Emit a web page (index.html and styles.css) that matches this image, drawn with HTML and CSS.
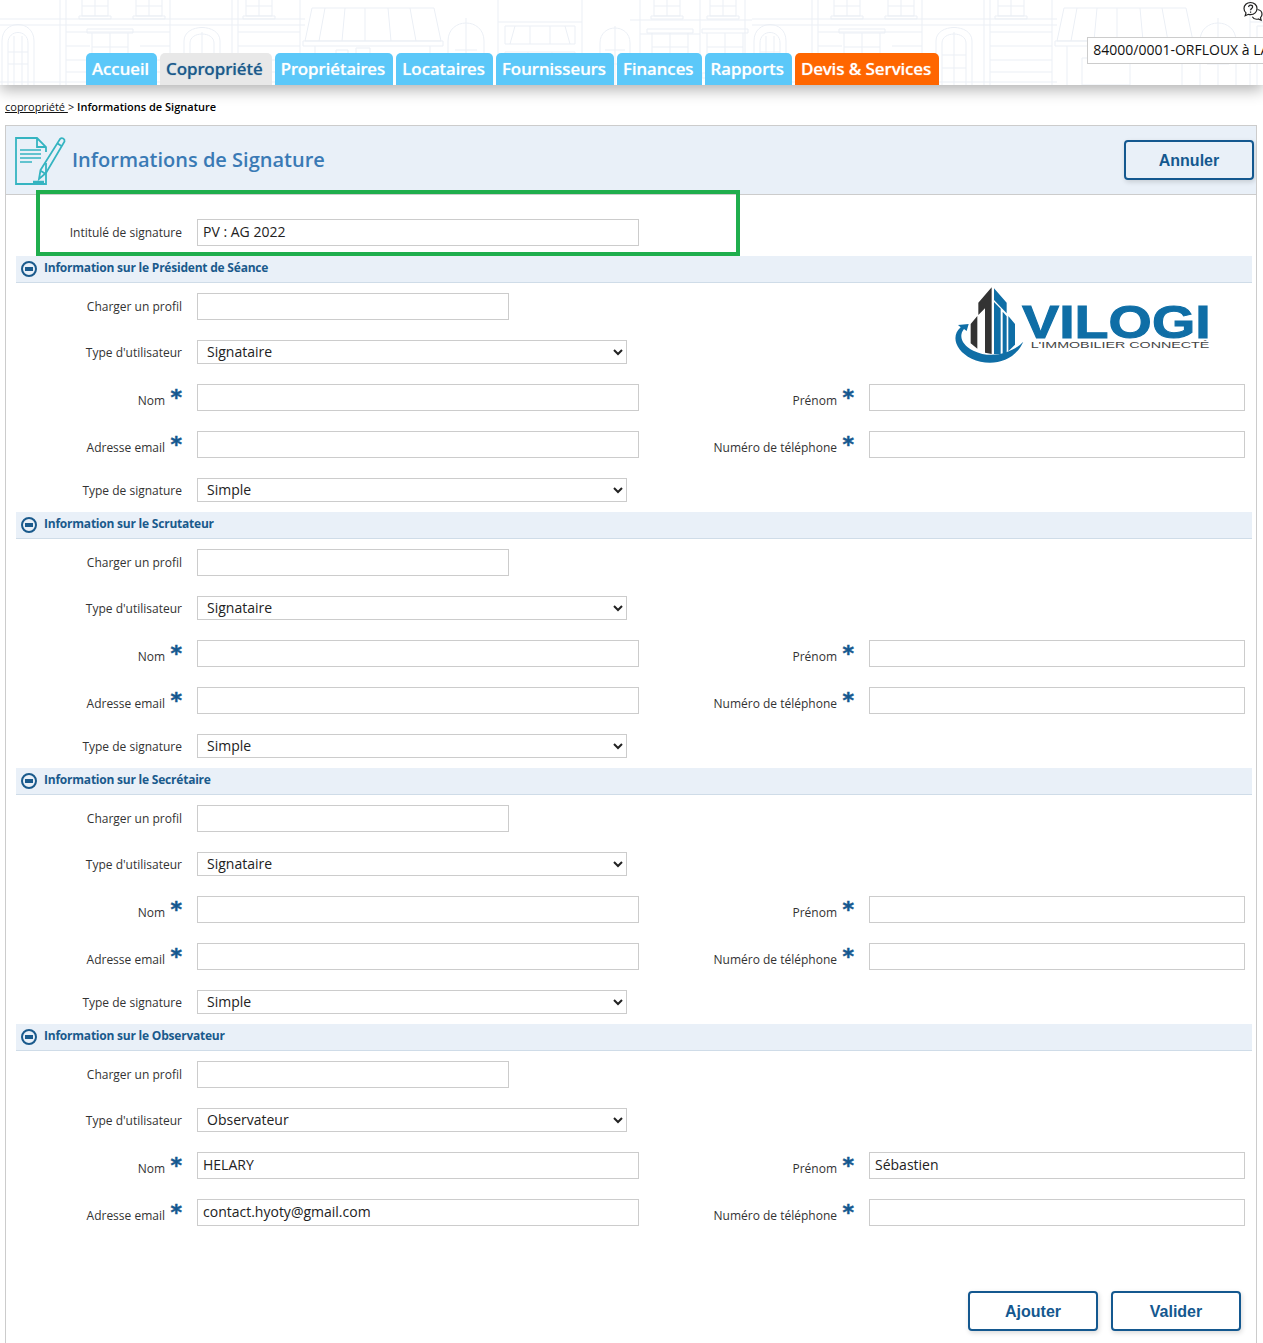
FILE: index.html
```html
<!DOCTYPE html>
<html lang="fr">
<head>
    <meta charset="UTF-8">
    <meta name="viewport" content="width=device-width, initial-scale=1.0">
    <title>Informations de Signature</title>
    <link rel="stylesheet" href="styles.css">
</head>
<body>
    <!-- Top bar -->
    <header class="topbar">
        <svg class="topbar-bg" width="1263" height="85" aria-hidden="true">
            <defs>
                <g id="win" fill="none" stroke="#ebeff5" stroke-width="1">
                    <path d="M-3 -6h46v4h-46zM2 -2v40h36v-40M20 -2v40M2 12h36M2 26h36M-3 38h46v5h-46z"/>
                </g>
                <g id="top-win" fill="none" stroke="#ebeff5" stroke-width="1">
                    <path d="M0 0v16h26v-16M13 0v16M0 6h26M-3 16h32v3h-32z"/>
                </g>
                <pattern id="facade" width="752" height="85" patternUnits="userSpaceOnUse">
                    <g fill="none" stroke="#ebeff5" stroke-width="1">
                        <path d="M0 19h305M0 25h305M60 0v85M66 0v85M170 0v85M232 0v85M238 0v85M300 0v85M0 82h305"/>
                        <path d="M66 32h104M66 60h24M66 72h24M66 46h24M140 46h30M140 60h30M140 72h30M238 32h62M238 46h62M238 60h62M238 72h62"/>
                        <path d="M2 85v-44c0-22 32-22 32 0v44M8 85v-42c0-14 20-14 20 0v42M14 36v49M22 36v49M8 52h20M8 64h20"/>
                        <path d="M184 85v-44c0-18 36-18 36 0v44M190 85v-42c0-12 24-12 24 0v42M202 32v53M190 55h24M190 68h24"/>
                        <path d="M312 8h122l7 33h-136zM325 8l-6 33M345 8l-3 33M365 8v33M388 8l3 33M410 8l6 33M303 41h140v5h-140zM315 46v39M430 46v39"/>
                        <path d="M330 58h48v27h-48zM336 58v-8h12v8M356 58v-10h14v10"/>
                        <path d="M448 85v-44c0-24 36-24 36 0v44M466 18v67M455 50h22M455 64h22"/>
                        <path d="M498 0v85M582 0v85M498 22h84M505 26h70v18h-70zM515 26l-5 18M530 26v18M550 26v18M565 26l5 18M505 52h70v33M505 52v33M528 52v33M552 52v33"/>
                        <path d="M600 85v-42c0-20 30-20 30 0v42M615 26v59M605 50h20M605 64h20M640 0v85M700 0v85M745 0v85M630 20h122M640 34h60M640 74h60"/>
                    </g>
                    <use href="#win" x="90" y="35"/>
                    <use href="#top-win" x="82" y="0"/>
                    <use href="#top-win" x="136" y="0"/>
                    <use href="#top-win" x="246" y="0"/>
                    <use href="#top-win" x="654" y="0"/>
                    <use href="#top-win" x="710" y="0"/>
                    <use href="#win" x="650" y="35"/>
                    <use href="#win" x="705" y="35"/>
                </pattern>
            </defs>
            <rect width="1263" height="85" fill="url(#facade)"/>
        </svg>
        <nav class="tabs">
            <a class="tab">Accueil</a>
            <a class="tab active">Copropriété</a>
            <a class="tab">Propriétaires</a>
            <a class="tab">Locataires</a>
            <a class="tab">Fournisseurs</a>
            <a class="tab">Finances</a>
            <a class="tab">Rapports</a>
            <a class="tab orange">Devis &amp; Services</a>
        </nav>
        <div class="site-box">84000/0001-ORFLOUX à LAVAL</div>
        <svg class="help-icon" width="22" height="22" viewBox="0 0 22 22" fill="none" stroke="#222" stroke-width="1.2">
            <path d="M8.500 1.500c-3.800 0-6.500 2.600-6.500 6 0 1.800.8 3.300 2 4.400l-.8 2.800 3.200-1.400c.7.200 1.400.3 2.100.3 3.800 0 6.500-2.700 6.500-6.100s-2.700-6-6.500-6z"/>
            <path d="M15.500 8.500c2.600.4 4.500 2.300 4.500 4.800 0 1.300-.6 2.500-1.500 3.400l.6 2.500-2.800-1.200c-2.300.6-4.800-.3-6-2.300"/>
            <path d="M6.500 6c.3-1.200 1.100-1.800 2.100-1.800 1.200 0 2 .8 2 1.800 0 1.500-2 1.600-2 3.200M8.600 10.600v1.200"/>
        </svg>
    </header>

    <div class="breadcrumb"><a href="#">copropriété </a> &gt; <strong>Informations de Signature</strong></div>

    <main class="panel">
        <div class="panel-head">
            <svg class="doc-icon" width="52" height="52" viewBox="0 0 52 52" fill="none" stroke="#35b4c1" stroke-width="1.800">
                <path d="M31 27v21H1V2h21l9 9v5M22 2v9h9"/>
                <path d="M5 14h21M5 18h21M5 22h21M5 26h12" stroke-width="1.500"/>
                <path d="M45 3c2-1.800 5-.2 4.500 2.500L31 37l-7 6 1.500-9zM42 7l5 3.500M26 35l4 2.500"/>
                <path d="M18 46h11" stroke-width="2.500"/>
            </svg>
            <h1>Informations de Signature</h1>
            <button class="btn">Annuler</button>
        </div>

        <div class="title-row">
            <label>Intitulé de signature</label>
            <input type="text" class="wide" value="PV : AG 2022">
        </div>
        <div class="highlight"></div>

        <section>
            <h2 class="section-head"><span class="collapse"></span>Information sur le Président de Séance</h2>
            <div class="fields">
                <svg class="logo" width="290" height="90" viewBox="0 0 870 270">
                    <path fill="#333" d="M155 22L115 68v37l20-20v133l20 4zM112 108L92 132v58l20 16z"/>
                    <path fill="#0f6ea6" d="M162 25l38 43v32L162 60zM162 66l20 20v136h-20zM188 95l12 14v109l-12 4zM205 108l20 24v62l-20 20z"/>
                    <path fill="#0f6ea6" d="M86 132l-32 3 8 7c-30 26-16 70 33 94 50 24 125 16 155-51-36 38-100 52-150 27-35-17-45-45-28-65l8 6z"/>
                    <text class="logo-name" x="246" y="175" textLength="566" lengthAdjust="spacingAndGlyphs">VILOGI</text>
                    <text class="logo-sub" x="272" y="204" textLength="536" lengthAdjust="spacingAndGlyphs">L'IMMOBILIER CONNECTÉ</text>
                </svg>
                <label>Charger un profil</label>
                <input type="text" class="short">
                <label>Type d'utilisateur</label>
                <select class="pick"><option>Signataire</option></select>
                <label class="req">Nom</label>
                <input type="text" class="wide">
                <label class="req second">Prénom</label>
                <input type="text" class="narrow second">
                <label class="req">Adresse email</label>
                <input type="text" class="wide">
                <label class="req second">Numéro de téléphone</label>
                <input type="text" class="narrow second">
                <label>Type de signature</label>
                <select class="pick"><option>Simple</option></select>
            </div>
        </section>

        <section>
            <h2 class="section-head"><span class="collapse"></span>Information sur le Scrutateur</h2>
            <div class="fields">
                <label>Charger un profil</label>
                <input type="text" class="short">
                <label>Type d'utilisateur</label>
                <select class="pick"><option>Signataire</option></select>
                <label class="req">Nom</label>
                <input type="text" class="wide">
                <label class="req second">Prénom</label>
                <input type="text" class="narrow second">
                <label class="req">Adresse email</label>
                <input type="text" class="wide">
                <label class="req second">Numéro de téléphone</label>
                <input type="text" class="narrow second">
                <label>Type de signature</label>
                <select class="pick"><option>Simple</option></select>
            </div>
        </section>

        <section>
            <h2 class="section-head"><span class="collapse"></span>Information sur le Secrétaire</h2>
            <div class="fields">
                <label>Charger un profil</label>
                <input type="text" class="short">
                <label>Type d'utilisateur</label>
                <select class="pick"><option>Signataire</option></select>
                <label class="req">Nom</label>
                <input type="text" class="wide">
                <label class="req second">Prénom</label>
                <input type="text" class="narrow second">
                <label class="req">Adresse email</label>
                <input type="text" class="wide">
                <label class="req second">Numéro de téléphone</label>
                <input type="text" class="narrow second">
                <label>Type de signature</label>
                <select class="pick"><option>Simple</option></select>
            </div>
        </section>

        <section>
            <h2 class="section-head"><span class="collapse"></span>Information sur le Observateur</h2>
            <div class="fields">
                <label>Charger un profil</label>
                <input type="text" class="short">
                <label>Type d'utilisateur</label>
                <select class="pick"><option>Observateur</option></select>
                <label class="req">Nom</label>
                <input type="text" class="wide" value="HELARY">
                <label class="req second">Prénom</label>
                <input type="text" class="narrow second" value="Sébastien">
                <label class="req">Adresse email</label>
                <input type="text" class="wide" value="contact.hyoty@gmail.com">
                <label class="req second">Numéro de téléphone</label>
                <input type="text" class="narrow second">
            </div>
        </section>

        <div class="actions">
            <button class="btn">Ajouter</button>
            <button class="btn">Valider</button>
        </div>
    </main>
</body>
</html>
```

FILE: styles.css
```css
html, body {
    overflow-x: hidden;
}
body {
    font-family: "Open Sans", Arial, sans-serif;
    margin: 0;
    background-color: #fff;
    color: #333;
}

/* Top bar */
.topbar {
    position: relative;
    height: 85px;
    display: flex;
    align-items: flex-end;
    overflow: hidden;
    padding-left: 86px;
    background-color: #fff;
    box-shadow: 0 5px 14px rgba(0, 0, 0, 0.3);
}
.topbar-bg {
    position: absolute;
    left: 0;
    top: 0;
}
.tabs {
    position: relative;
    display: flex;
    gap: 3px;
}
.tab {
    display: block;
    height: 32px;
    line-height: 32px;
    padding: 0 8px 0 6px;
    border-radius: 5px 5px 0 0;
    background-color: #5bc8f9;
    color: #fff;
    font-family: "Noto Sans", Arial, sans-serif;
    font-size: 17px;
    font-weight: 500;
    letter-spacing: -0.06px;
    text-shadow: 0 0 1px rgba(255, 255, 255, 0.7);
    white-space: nowrap;
}
.tab.active {
    padding-right: 9px;
    background-color: #e8e8e8;
    color: #1a5a8c;
    text-shadow: 0 0 1px rgba(26, 90, 140, 0.6);
}
.tab.orange {
    background-color: #ff6600;
}
.site-box {
    position: relative;
    flex: none;
    width: 300px;
    height: 25px;
    line-height: 23px;
    margin: 0 0 21px 148px;
    padding-left: 5px;
    border: 1px solid #ccc;
    background-color: #fff;
    color: #111;
    font-size: 14px;
    white-space: nowrap;
}
.help-icon {
    position: absolute;
    left: 1242px;
    top: 1px;
}

.breadcrumb {
    height: 40px;
    line-height: 44px;
    padding-left: 5px;
    font-size: 11px;
    color: #111;
}
.breadcrumb a {
    color: #111;
}
.breadcrumb strong {
    color: #000;
    font-weight: 600;
}

/* Main panel */
.panel {
    position: relative;
    width: 1250px;
    height: 1217px;
    margin-left: 5px;
    border: 1px solid #ccc;
    border-bottom: none;
    overflow: hidden;
}
.panel-head {
    display: flex;
    align-items: center;
    height: 68px;
    padding: 0 2px 0 9px;
    background-color: #e9f0f8;
    border-bottom: 1px solid #ccc;
}
.doc-icon {
    flex: none;
    margin-top: 4px;
}
.panel-head h1 {
    flex: 1;
    margin: 0 0 2px 5px;
    font-size: 20px;
    font-weight: 600;
    color: #3a7ab5;
}
.btn {
    width: 130px;
    height: 40px;
    padding-top: 2px;
    border: 2px solid #14588f;
    border-radius: 4px;
    background-color: transparent;
    color: #14588f;
    font-family: "Liberation Sans", Arial, sans-serif;
    font-size: 16px;
    font-weight: bold;
    box-shadow: 1px 2px 5px rgba(0, 0, 0, 0.15);
    cursor: pointer;
}
.title-row {
    display: flex;
    align-items: center;
    gap: 15px;
    padding: 24px 0 10px 10px;
}
.title-row label {
    width: 166px;
    font-size: 12px;
    text-align: right;
}
.highlight {
    position: absolute;
    left: 30px;
    top: 64px;
    width: 696px;
    height: 58px;
    border: 4px solid #1fae4d;
}

/* Sections */
section {
    margin: 0 4px 0 10px;
}
.section-head {
    display: flex;
    align-items: center;
    box-sizing: border-box;
    height: 27px;
    margin: 0;
    padding: 0 0 4px 5px;
    background-color: #e9f0f8;
    border-bottom: 1px solid #cfdce8;
    font-size: 12px;
    font-weight: 700;
    letter-spacing: -0.22px;
    color: #1a5a8c;
}
.collapse {
    position: relative;
    flex: none;
    box-sizing: border-box;
    width: 16px;
    height: 16px;
    margin: 4px 7px 0 0;
    border: 2px solid #1a5a8c;
    border-radius: 50%;
}
.collapse::after {
    content: "";
    position: absolute;
    left: 2px;
    top: 4px;
    width: 8px;
    height: 4px;
    background-color: #1a5a8c;
}
.fields {
    display: grid;
    grid-template-columns: 166px 442px 200px 376px;
    column-gap: 15px;
    row-gap: 20px;
    align-items: center;
    padding: 10px 0;
}
.fields .logo {
    grid-column: 3 / 5;
    grid-row: 1 / 3;
    justify-self: end;
    margin: -13px 15px -6px 0;
}
.logo-name {
    font-family: "Liberation Sans", Arial, sans-serif;
    font-size: 138px;
    font-weight: bold;
    fill: #0f6ea6;
    stroke: #0f6ea6;
    stroke-width: 3px;
}
.logo-sub {
    font-family: "Liberation Sans", Arial, sans-serif;
    font-size: 26px;
    fill: #444;
}
.fields label {
    grid-column: 1;
    justify-self: end;
    font-size: 12px;
    text-align: right;
}
.fields label.second {
    grid-column: 3;
}
.fields input,
.fields select {
    grid-column: 2;
}
.fields input.second {
    grid-column: 4;
}
.fields label.req {
    position: relative;
    top: 3px;
    padding-right: 17px;
}
.fields label.req::after {
    content: "*";
    position: absolute;
    right: 0;
    top: -5px;
    font-family: "DejaVu Sans", sans-serif;
    font-size: 22px;
    font-weight: bold;
    line-height: 1;
    color: #14588f;
    -webkit-text-stroke: 0.5px #14588f;
}

/* Inputs */
input {
    box-sizing: border-box;
    height: 27px;
    padding: 0 5px 2px;
    border: 1px solid #ccc;
    background-color: #fff;
    color: #222;
    font-family: "Open Sans", Arial, sans-serif;
    font-size: 14px;
}
.wide {
    width: 442px;
}
.narrow {
    width: 376px;
}
.short {
    width: 312px;
}
.pick {
    box-sizing: border-box;
    width: 430px;
    height: 24px;
    padding: 0 0 2px 5px;
    border: 1px solid #ccc;
    border-radius: 0;
    background-color: #fff;
    color: #222;
    font-family: "Open Sans", Arial, sans-serif;
    font-size: 14px;
}

.actions {
    display: flex;
    justify-content: flex-end;
    gap: 13px;
    margin: 55px 15px 0 0;
}
```
